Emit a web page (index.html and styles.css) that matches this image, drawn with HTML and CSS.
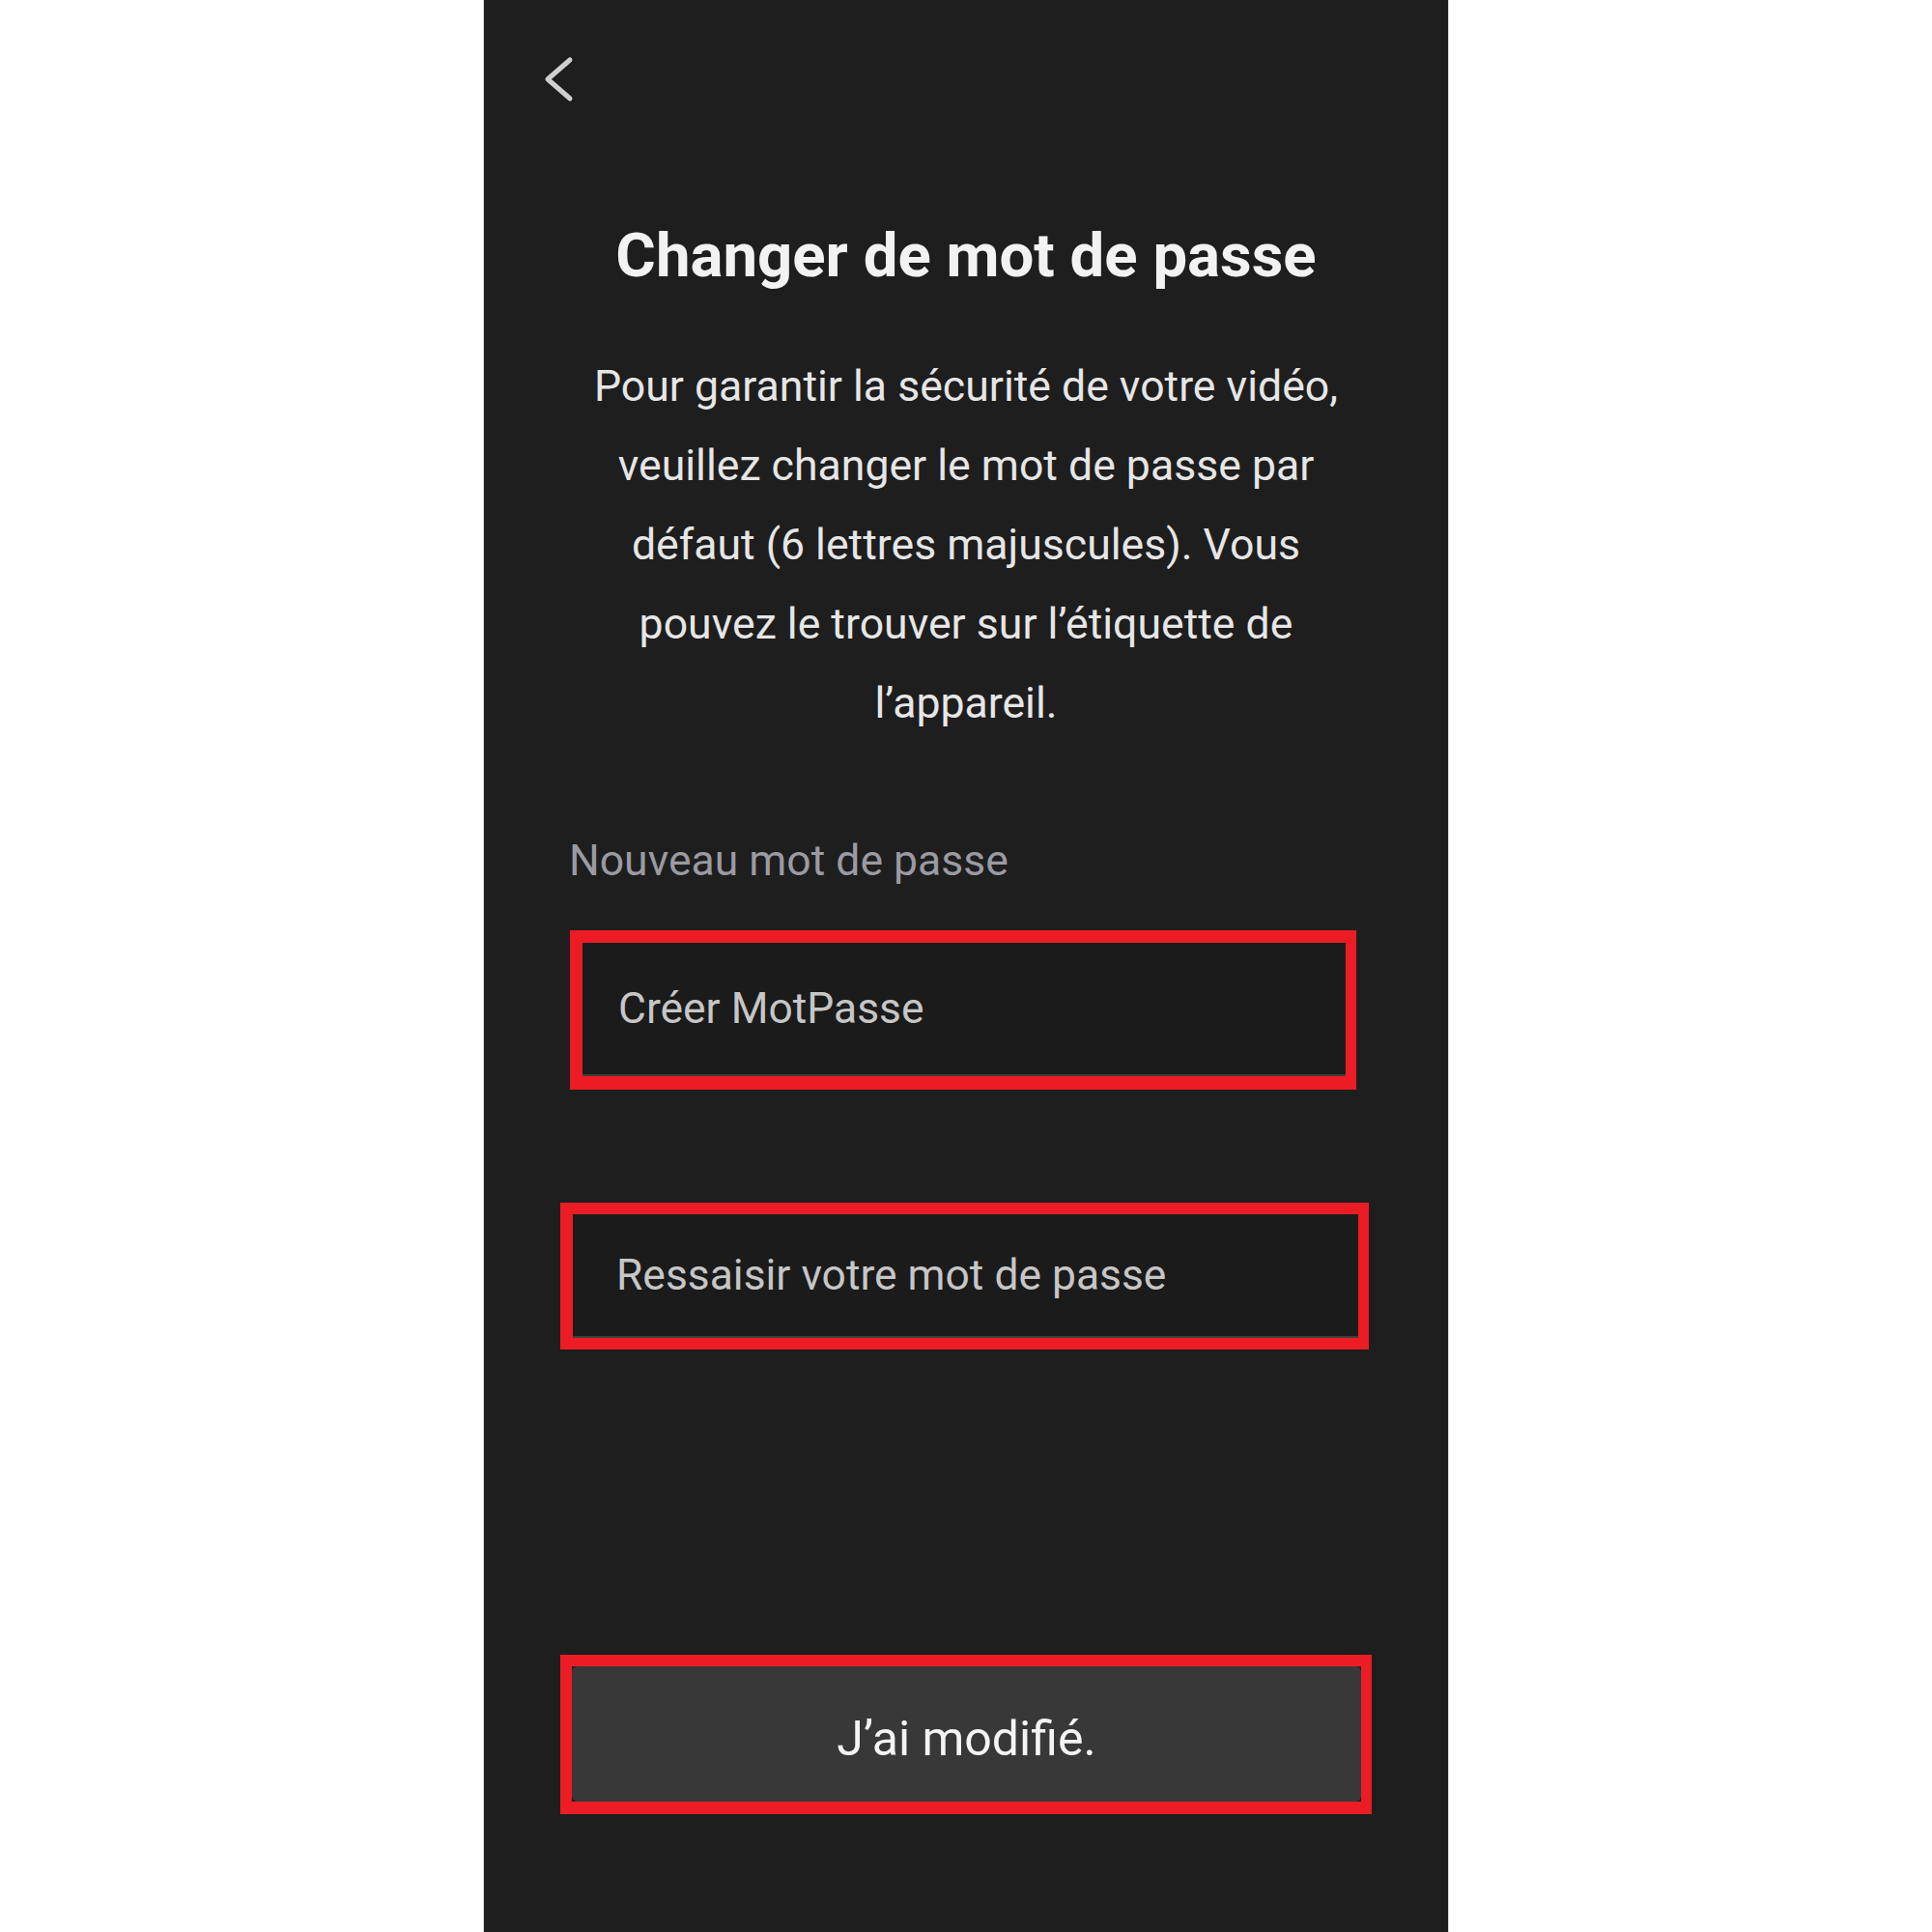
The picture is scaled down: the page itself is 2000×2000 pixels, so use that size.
FILE: index.html
```html
<!DOCTYPE html>
<html lang="fr">
<head>
  <meta charset="UTF-8" />
  <meta name="viewport" content="width=device-width, initial-scale=1.0" />
  <title>Changer de mot de passe</title>
  <link rel="stylesheet" href="styles.css">
</head>
<body>
  <div class="phone">
    <!-- Back arrow -->
    <div class="top-bar">
      <a class="back" href="#" aria-label="Retour">
        <svg width="34" height="48" viewBox="0 0 34 48">
          <polyline points="29,4 6,24 29,44" fill="none" stroke="#cfcfcf" stroke-width="5" stroke-linecap="round" stroke-linejoin="round" />
        </svg>
      </a>
    </div>

    <h1>Changer de mot de passe</h1>
    <p class="intro">Pour garantir la sécurité de votre vidéo, veuillez changer le mot de passe par défaut (6 lettres majuscules). Vous pouvez le trouver sur l’étiquette de l’appareil.</p>

    <!-- Password fields -->
    <div class="form">
      <p class="label">Nouveau mot de passe</p>
      <div class="field field-new">
        <div class="field-inner"><span>Créer MotPasse</span></div>
      </div>
      <div class="field field-confirm">
        <div class="field-inner"><span>Ressaisir votre mot de passe</span></div>
      </div>

      <div class="submit">
        <button class="submit-btn">J’ai modifié.</button>
      </div>
    </div>
  </div>
</body>
</html>
```

FILE: styles.css
```css
* {
  margin: 0;
  padding: 0;
  box-sizing: border-box;
}

body {
  font-family: Roboto, 'Noto Sans', sans-serif;
  background-color: #fff;
  display: flex;
  justify-content: center;
  min-height: 2000px;
}

/* Dark phone screen */
.phone {
  width: 998px;
  min-height: 2000px;
  background-color: #1e1e1e;
  padding: 58px 88px 0 88px;
  box-shadow: 0 0 0 1px #d9d9d9;
}

.top-bar {
  height: 48px;
  margin-left: -28px;
}
.back {
  display: inline-block;
}
.back svg {
  display: block;
}

h1 {
  margin-top: 122px;
  font-size: 63.5px;
  line-height: 74px;
  font-weight: 700;
  text-align: center;
  color: #f2f2f2;
}

.intro {
  width: 790px;
  margin: 57px auto 0 auto;
  font-size: 44.6px;
  line-height: 82px;
  text-align: center;
  color: #e6e6e6;
}

.label {
  margin-top: 96px;
  font-size: 44.5px;
  line-height: 52px;
  color: #9b9aa3;
}

/* Inputs (highlighted in red) */
.field {
  border: 13px solid #ec1c24;
  font-size: 44.4px;
  color: #c6c6c6;
}
.field-inner {
  height: 100%;
  display: flex;
  align-items: center;
  background-color: #1b1b1b;
  border-bottom: 2px solid #3d3d3d;
}

.field-new {
  width: 814px;
  height: 165px;
  margin: 46px 0 0 1px;
  border-width: 13px 11px 14px 13px;
}
.field-new .field-inner {
  padding-left: 37px;
}

.field-confirm {
  width: 837px;
  height: 152px;
  margin: 117px 0 0 -9px;
  border-width: 12px 11px 12px 13px;
}
.field-confirm .field-inner {
  padding-left: 45px;
}

.submit {
  width: 840px;
  height: 165px;
  margin: 316px 0 0 -9px;
  border: 12px solid #ec1c24;
  border-right-width: 11px;
  border-bottom-width: 13px;
}
.submit-btn {
  width: 100%;
  height: 100%;
  padding-top: 10px;
  border: none;
  border-radius: 6px;
  background-color: #383838;
  color: #f4f4f4;
  font-family: Roboto, 'Noto Sans', sans-serif;
  font-size: 50px;
  cursor: pointer;
}
```
